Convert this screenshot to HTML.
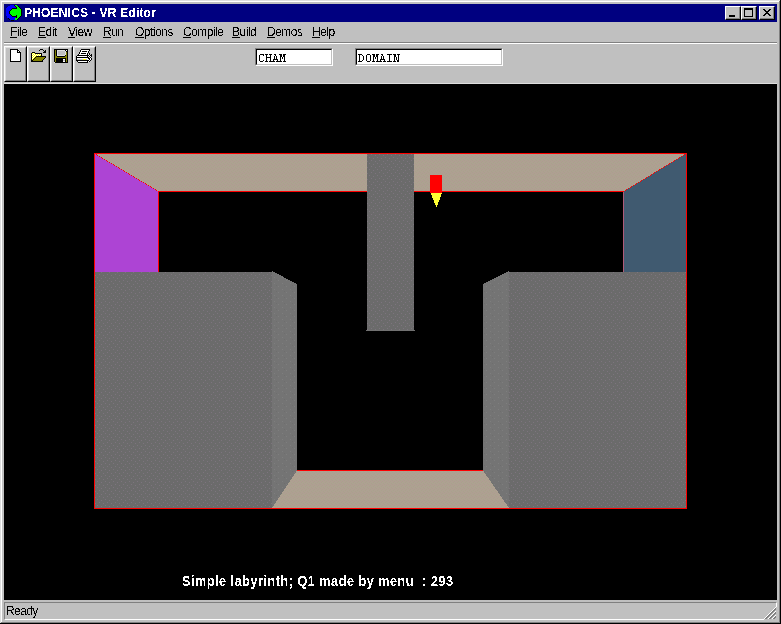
<!DOCTYPE html>
<html><head><meta charset="utf-8">
<style>
html,body{margin:0;padding:0;}
body{width:781px;height:624px;overflow:hidden;position:relative;background:#c0c0c0;font-family:"Liberation Sans",sans-serif;font-size:11px;color:#000;}
.a{position:absolute;}
.menu > span{position:absolute;top:0;white-space:nowrap;font-size:12px;letter-spacing:-0.5px;}
.crisp{filter:url(#th);}
.crisp3{filter:url(#th3);}
.u{text-decoration:underline;text-underline-offset:1px;}
</style></head><body>
<svg width="0" height="0" style="position:absolute"><filter id="th" x="0" y="0" width="100%" height="100%" color-interpolation-filters="sRGB"><feComponentTransfer><feFuncA type="discrete" tableValues="0 0 1 1"/></feComponentTransfer></filter><filter id="th3" x="0" y="0" width="100%" height="100%" color-interpolation-filters="sRGB"><feComponentTransfer><feFuncA type="discrete" tableValues="0 0 1 1 1"/></feComponentTransfer></filter></svg>
<!-- window frame -->
<div class="a" style="left:0;top:0;width:781px;height:1px;background:#dfdfdf"></div>
<div class="a" style="left:0;top:0;width:1px;height:624px;background:#dfdfdf"></div>
<div class="a" style="left:1px;top:1px;width:779px;height:1px;background:#fff"></div>
<div class="a" style="left:1px;top:1px;width:1px;height:622px;background:#fff"></div>
<div class="a" style="left:780px;top:0;width:1px;height:624px;background:#000"></div>
<div class="a" style="left:0;top:623px;width:781px;height:1px;background:#000"></div>
<div class="a" style="left:779px;top:1px;width:1px;height:622px;background:#808080"></div>
<div class="a" style="left:1px;top:622px;width:779px;height:1px;background:#808080"></div>

<!-- title bar -->
<div class="a" style="left:4px;top:4px;width:773px;height:18px;background:#000080"></div>
<svg class="a" style="left:4px;top:4px;" width="18" height="17" viewBox="0 0 18 17" shape-rendering="crispEdges"><rect x="6" y="1" width="4" height="1" fill="#0000ff"/><rect x="10" y="1" width="1" height="1" fill="#000000"/><rect x="11" y="1" width="2" height="1" fill="#00ff00"/><rect x="4" y="2" width="7" height="1" fill="#0000ff"/><rect x="11" y="2" width="1" height="1" fill="#000000"/><rect x="12" y="2" width="2" height="1" fill="#00ff00"/><rect x="14" y="2" width="1" height="1" fill="#000000"/><rect x="3" y="3" width="9" height="1" fill="#0000ff"/><rect x="12" y="3" width="1" height="1" fill="#000000"/><rect x="13" y="3" width="2" height="1" fill="#00ff00"/><rect x="15" y="3" width="1" height="1" fill="#000000"/><rect x="2" y="4" width="6" height="1" fill="#0000ff"/><rect x="8" y="4" width="5" height="1" fill="#000000"/><rect x="13" y="4" width="3" height="1" fill="#00ff00"/><rect x="16" y="4" width="1" height="1" fill="#000000"/><rect x="2" y="5" width="5" height="1" fill="#0000ff"/><rect x="7" y="5" width="1" height="1" fill="#000000"/><rect x="8" y="5" width="9" height="1" fill="#00ff00"/><rect x="17" y="5" width="1" height="1" fill="#000000"/><rect x="2" y="6" width="4" height="1" fill="#0000ff"/><rect x="6" y="6" width="1" height="1" fill="#000000"/><rect x="7" y="6" width="10" height="1" fill="#00ff00"/><rect x="17" y="6" width="1" height="1" fill="#000000"/><rect x="2" y="7" width="3" height="1" fill="#0000ff"/><rect x="5" y="7" width="1" height="1" fill="#000000"/><rect x="6" y="7" width="11" height="1" fill="#00ff00"/><rect x="17" y="7" width="1" height="1" fill="#000000"/><rect x="2" y="8" width="3" height="1" fill="#0000ff"/><rect x="5" y="8" width="1" height="1" fill="#000000"/><rect x="6" y="8" width="11" height="1" fill="#00ff00"/><rect x="17" y="8" width="1" height="1" fill="#000000"/><rect x="2" y="9" width="3" height="1" fill="#0000ff"/><rect x="5" y="9" width="1" height="1" fill="#000000"/><rect x="6" y="9" width="11" height="1" fill="#00ff00"/><rect x="17" y="9" width="1" height="1" fill="#000000"/><rect x="2" y="10" width="4" height="1" fill="#0000ff"/><rect x="6" y="10" width="1" height="1" fill="#000000"/><rect x="7" y="10" width="10" height="1" fill="#00ff00"/><rect x="17" y="10" width="1" height="1" fill="#000000"/><rect x="2" y="11" width="5" height="1" fill="#0000ff"/><rect x="7" y="11" width="1" height="1" fill="#000000"/><rect x="8" y="11" width="4" height="1" fill="#00ff00"/><rect x="12" y="11" width="1" height="1" fill="#000000"/><rect x="13" y="11" width="4" height="1" fill="#00ff00"/><rect x="17" y="11" width="1" height="1" fill="#000000"/><rect x="3" y="12" width="5" height="1" fill="#0000ff"/><rect x="8" y="12" width="5" height="1" fill="#000000"/><rect x="13" y="12" width="3" height="1" fill="#00ff00"/><rect x="16" y="12" width="1" height="1" fill="#000000"/><rect x="3" y="13" width="9" height="1" fill="#0000ff"/><rect x="12" y="13" width="1" height="1" fill="#000000"/><rect x="13" y="13" width="2" height="1" fill="#00ff00"/><rect x="15" y="13" width="1" height="1" fill="#000000"/><rect x="4" y="14" width="1" height="1" fill="#000000"/><rect x="5" y="14" width="6" height="1" fill="#0000ff"/><rect x="11" y="14" width="3" height="1" fill="#00ff00"/><rect x="14" y="14" width="1" height="1" fill="#000000"/><rect x="5" y="15" width="1" height="1" fill="#000000"/><rect x="6" y="15" width="5" height="1" fill="#0000ff"/><rect x="11" y="15" width="2" height="1" fill="#00ff00"/><rect x="13" y="15" width="1" height="1" fill="#000000"/><rect x="7" y="16" width="3" height="1" fill="#000000"/></svg>
<div class="a crisp" style="left:24px;top:6px;line-height:14px;color:#fff;font-weight:bold;font-size:12px;letter-spacing:0.2px;white-space:nowrap">PHOENICS - VR Editor</div>

<!-- caption buttons -->
<div class="a" style="left:725px;top:6px;width:16px;height:14px;box-sizing:border-box;background:#c0c0c0;border-top:1px solid #fff;border-left:1px solid #fff;border-right:1px solid #000;border-bottom:1px solid #000;">
  <div class="a" style="left:0;top:0;right:0;bottom:0;border-right:1px solid #808080;border-bottom:1px solid #808080;"></div>
  <div class="a" style="left:3px;top:8px;width:6px;height:2px;background:#000"></div>
</div>
<div class="a" style="left:741px;top:6px;width:16px;height:14px;box-sizing:border-box;background:#c0c0c0;border-top:1px solid #fff;border-left:1px solid #fff;border-right:1px solid #000;border-bottom:1px solid #000;">
  <div class="a" style="left:0;top:0;right:0;bottom:0;border-right:1px solid #808080;border-bottom:1px solid #808080;"></div>
  <div class="a" style="left:2px;top:1px;width:9px;height:9px;box-sizing:border-box;border:1px solid #000;border-top-width:2px"></div>
</div>
<div class="a" style="left:759px;top:6px;width:16px;height:14px;box-sizing:border-box;background:#c0c0c0;border-top:1px solid #fff;border-left:1px solid #fff;border-right:1px solid #000;border-bottom:1px solid #000;">
  <div class="a" style="left:0;top:0;right:0;bottom:0;border-right:1px solid #808080;border-bottom:1px solid #808080;"></div>
  <svg class="a" style="left:3px;top:2px" width="8" height="7" viewBox="0 0 8 7" shape-rendering="crispEdges">
    <path d="M0 0h2v1h1v1h2v-1h1v-1h2v1h-1v1h-1v1h-1v1h1v1h1v1h1v1h-2v-1h-1v-1h-2v1h-1v1h-2v-1h1v-1h1v-1h1v-1h-1v-1h-1v-1h-1z" fill="#000"/>
  </svg>
</div>

<!-- menu bar -->
<div class="a menu crisp" style="left:0;top:25px;width:781px;height:14px;">
  <span style="left:10px"><span class="u" style="position:static">F</span>ile</span>
  <span style="left:38px"><span class="u" style="position:static">E</span>dit</span>
  <span style="left:68px"><span class="u" style="position:static">V</span>iew</span>
  <span style="left:103px"><span class="u" style="position:static">R</span>un</span>
  <span style="left:135px"><span class="u" style="position:static">O</span>ptions</span>
  <span style="left:183px"><span class="u" style="position:static">C</span>ompile</span>
  <span style="left:232px"><span class="u" style="position:static">B</span>uild</span>
  <span style="left:267px"><span class="u" style="position:static">D</span>emos</span>
  <span style="left:312px"><span class="u" style="position:static">H</span>elp</span>
</div>
<div class="a" style="left:4px;top:42px;width:773px;height:1px;background:#808080"></div>
<div class="a" style="left:4px;top:43px;width:773px;height:1px;background:#fff"></div>

<!-- toolbar buttons -->
<div class="a" style="left:4px;top:46px;width:23px;height:36px;box-sizing:border-box;background:#c0c0c0;border-top:1px solid #fff;border-left:1px solid #fff;border-right:1px solid #000;border-bottom:1px solid #000;"><div class="a" style="left:0;top:0;right:0;bottom:0;border-top:1px solid #dfdfdf;border-left:1px solid #dfdfdf;border-right:1px solid #808080;border-bottom:1px solid #808080;"></div></div>
<div class="a" style="left:27px;top:46px;width:23px;height:36px;box-sizing:border-box;background:#c0c0c0;border-top:1px solid #fff;border-left:1px solid #fff;border-right:1px solid #000;border-bottom:1px solid #000;"><div class="a" style="left:0;top:0;right:0;bottom:0;border-top:1px solid #dfdfdf;border-left:1px solid #dfdfdf;border-right:1px solid #808080;border-bottom:1px solid #808080;"></div></div>
<div class="a" style="left:50px;top:46px;width:23px;height:36px;box-sizing:border-box;background:#c0c0c0;border-top:1px solid #fff;border-left:1px solid #fff;border-right:1px solid #000;border-bottom:1px solid #000;"><div class="a" style="left:0;top:0;right:0;bottom:0;border-top:1px solid #dfdfdf;border-left:1px solid #dfdfdf;border-right:1px solid #808080;border-bottom:1px solid #808080;"></div></div>
<div class="a" style="left:73px;top:46px;width:23px;height:36px;box-sizing:border-box;background:#c0c0c0;border-top:1px solid #fff;border-left:1px solid #fff;border-right:1px solid #000;border-bottom:1px solid #000;"><div class="a" style="left:0;top:0;right:0;bottom:0;border-top:1px solid #dfdfdf;border-left:1px solid #dfdfdf;border-right:1px solid #808080;border-bottom:1px solid #808080;"></div></div>
<svg class="a" style="left:10px;top:49px;" width="11" height="13" viewBox="0 0 11 13" shape-rendering="crispEdges"><rect x="0" y="0" width="8" height="1" fill="#000"/><rect x="8" y="0" width="1" height="1" fill="#dfdfdf"/><rect x="0" y="1" width="1" height="1" fill="#000"/><rect x="1" y="1" width="6" height="1" fill="#fff"/><rect x="7" y="1" width="2" height="1" fill="#000"/><rect x="9" y="1" width="1" height="1" fill="#dfdfdf"/><rect x="0" y="2" width="1" height="1" fill="#000"/><rect x="1" y="2" width="6" height="1" fill="#fff"/><rect x="7" y="2" width="1" height="1" fill="#000"/><rect x="8" y="2" width="1" height="1" fill="#fff"/><rect x="9" y="2" width="1" height="1" fill="#000"/><rect x="10" y="2" width="1" height="1" fill="#dfdfdf"/><rect x="0" y="3" width="1" height="1" fill="#000"/><rect x="1" y="3" width="6" height="1" fill="#fff"/><rect x="7" y="3" width="4" height="1" fill="#000"/><rect x="0" y="4" width="1" height="1" fill="#000"/><rect x="1" y="4" width="9" height="1" fill="#fff"/><rect x="10" y="4" width="1" height="1" fill="#000"/><rect x="0" y="5" width="1" height="1" fill="#000"/><rect x="1" y="5" width="9" height="1" fill="#fff"/><rect x="10" y="5" width="1" height="1" fill="#000"/><rect x="0" y="6" width="1" height="1" fill="#000"/><rect x="1" y="6" width="9" height="1" fill="#fff"/><rect x="10" y="6" width="1" height="1" fill="#000"/><rect x="0" y="7" width="1" height="1" fill="#000"/><rect x="1" y="7" width="9" height="1" fill="#fff"/><rect x="10" y="7" width="1" height="1" fill="#000"/><rect x="0" y="8" width="1" height="1" fill="#000"/><rect x="1" y="8" width="9" height="1" fill="#fff"/><rect x="10" y="8" width="1" height="1" fill="#000"/><rect x="0" y="9" width="1" height="1" fill="#000"/><rect x="1" y="9" width="9" height="1" fill="#fff"/><rect x="10" y="9" width="1" height="1" fill="#000"/><rect x="0" y="10" width="1" height="1" fill="#000"/><rect x="1" y="10" width="9" height="1" fill="#fff"/><rect x="10" y="10" width="1" height="1" fill="#000"/><rect x="0" y="11" width="1" height="1" fill="#000"/><rect x="1" y="11" width="9" height="1" fill="#fff"/><rect x="10" y="11" width="1" height="1" fill="#000"/><rect x="0" y="12" width="11" height="1" fill="#000"/></svg>
<svg class="a" style="left:30px;top:47px;" width="16" height="15" viewBox="0 0 16 15" shape-rendering="crispEdges"><rect x="10" y="2" width="3" height="1" fill="#000"/><rect x="9" y="3" width="1" height="1" fill="#000"/><rect x="13" y="3" width="1" height="1" fill="#000"/><rect x="15" y="3" width="1" height="1" fill="#000"/><rect x="14" y="4" width="2" height="1" fill="#000"/><rect x="2" y="5" width="3" height="1" fill="#000"/><rect x="13" y="5" width="3" height="1" fill="#000"/><rect x="1" y="6" width="1" height="1" fill="#000"/><rect x="2" y="6" width="1" height="1" fill="#ffff00"/><rect x="3" y="6" width="1" height="1" fill="#fff"/><rect x="4" y="6" width="1" height="1" fill="#ffff00"/><rect x="5" y="6" width="7" height="1" fill="#000"/><rect x="1" y="7" width="1" height="1" fill="#000"/><rect x="2" y="7" width="1" height="1" fill="#fff"/><rect x="3" y="7" width="1" height="1" fill="#ffff00"/><rect x="4" y="7" width="1" height="1" fill="#fff"/><rect x="5" y="7" width="1" height="1" fill="#ffff00"/><rect x="6" y="7" width="1" height="1" fill="#fff"/><rect x="7" y="7" width="1" height="1" fill="#ffff00"/><rect x="8" y="7" width="1" height="1" fill="#fff"/><rect x="9" y="7" width="1" height="1" fill="#ffff00"/><rect x="10" y="7" width="1" height="1" fill="#fff"/><rect x="11" y="7" width="1" height="1" fill="#000"/><rect x="1" y="8" width="1" height="1" fill="#000"/><rect x="2" y="8" width="1" height="1" fill="#ffff00"/><rect x="3" y="8" width="1" height="1" fill="#fff"/><rect x="4" y="8" width="1" height="1" fill="#ffff00"/><rect x="5" y="8" width="1" height="1" fill="#fff"/><rect x="6" y="8" width="1" height="1" fill="#ffff00"/><rect x="7" y="8" width="1" height="1" fill="#fff"/><rect x="8" y="8" width="1" height="1" fill="#ffff00"/><rect x="9" y="8" width="1" height="1" fill="#fff"/><rect x="10" y="8" width="1" height="1" fill="#ffff00"/><rect x="11" y="8" width="1" height="1" fill="#000"/><rect x="1" y="9" width="1" height="1" fill="#000"/><rect x="2" y="9" width="1" height="1" fill="#fff"/><rect x="3" y="9" width="1" height="1" fill="#ffff00"/><rect x="4" y="9" width="1" height="1" fill="#fff"/><rect x="5" y="9" width="1" height="1" fill="#ffff00"/><rect x="6" y="9" width="10" height="1" fill="#000"/><rect x="1" y="10" width="1" height="1" fill="#000"/><rect x="2" y="10" width="1" height="1" fill="#ffff00"/><rect x="3" y="10" width="1" height="1" fill="#fff"/><rect x="4" y="10" width="1" height="1" fill="#ffff00"/><rect x="5" y="10" width="1" height="1" fill="#000"/><rect x="6" y="10" width="9" height="1" fill="#808000"/><rect x="15" y="10" width="1" height="1" fill="#000"/><rect x="1" y="11" width="1" height="1" fill="#000"/><rect x="2" y="11" width="1" height="1" fill="#fff"/><rect x="3" y="11" width="1" height="1" fill="#ffff00"/><rect x="4" y="11" width="1" height="1" fill="#000"/><rect x="5" y="11" width="9" height="1" fill="#808000"/><rect x="14" y="11" width="1" height="1" fill="#000"/><rect x="1" y="12" width="1" height="1" fill="#000"/><rect x="2" y="12" width="1" height="1" fill="#ffff00"/><rect x="3" y="12" width="1" height="1" fill="#000"/><rect x="4" y="12" width="9" height="1" fill="#808000"/><rect x="13" y="12" width="1" height="1" fill="#000"/><rect x="1" y="13" width="2" height="1" fill="#000"/><rect x="3" y="13" width="9" height="1" fill="#808000"/><rect x="12" y="13" width="1" height="1" fill="#000"/><rect x="1" y="14" width="12" height="1" fill="#000"/></svg>
<svg class="a" style="left:54px;top:49px;" width="14" height="14" viewBox="0 0 14 14" shape-rendering="crispEdges"><rect x="0" y="0" width="14" height="1" fill="#000"/><rect x="0" y="1" width="1" height="1" fill="#000"/><rect x="1" y="1" width="1" height="1" fill="#808000"/><rect x="2" y="1" width="1" height="1" fill="#000"/><rect x="3" y="1" width="8" height="1" fill="#dfdfdf"/><rect x="11" y="1" width="1" height="1" fill="#000"/><rect x="12" y="1" width="1" height="1" fill="#fff"/><rect x="13" y="1" width="1" height="1" fill="#000"/><rect x="0" y="2" width="1" height="1" fill="#000"/><rect x="1" y="2" width="1" height="1" fill="#808000"/><rect x="2" y="2" width="1" height="1" fill="#000"/><rect x="3" y="2" width="1" height="1" fill="#dfdfdf"/><rect x="4" y="2" width="7" height="1" fill="#c0c0c0"/><rect x="11" y="2" width="1" height="1" fill="#dfdfdf"/><rect x="12" y="2" width="2" height="1" fill="#000"/><rect x="0" y="3" width="1" height="1" fill="#000"/><rect x="1" y="3" width="1" height="1" fill="#808000"/><rect x="2" y="3" width="1" height="1" fill="#000"/><rect x="3" y="3" width="1" height="1" fill="#dfdfdf"/><rect x="4" y="3" width="7" height="1" fill="#c0c0c0"/><rect x="11" y="3" width="1" height="1" fill="#dfdfdf"/><rect x="12" y="3" width="1" height="1" fill="#808000"/><rect x="13" y="3" width="1" height="1" fill="#000"/><rect x="0" y="4" width="1" height="1" fill="#000"/><rect x="1" y="4" width="1" height="1" fill="#808000"/><rect x="2" y="4" width="1" height="1" fill="#000"/><rect x="3" y="4" width="1" height="1" fill="#dfdfdf"/><rect x="4" y="4" width="7" height="1" fill="#c0c0c0"/><rect x="11" y="4" width="1" height="1" fill="#dfdfdf"/><rect x="12" y="4" width="1" height="1" fill="#808000"/><rect x="13" y="4" width="1" height="1" fill="#000"/><rect x="0" y="5" width="1" height="1" fill="#000"/><rect x="1" y="5" width="1" height="1" fill="#808000"/><rect x="2" y="5" width="1" height="1" fill="#000"/><rect x="3" y="5" width="1" height="1" fill="#dfdfdf"/><rect x="4" y="5" width="7" height="1" fill="#c0c0c0"/><rect x="11" y="5" width="1" height="1" fill="#dfdfdf"/><rect x="12" y="5" width="1" height="1" fill="#808000"/><rect x="13" y="5" width="1" height="1" fill="#000"/><rect x="0" y="6" width="1" height="1" fill="#000"/><rect x="1" y="6" width="1" height="1" fill="#808000"/><rect x="2" y="6" width="1" height="1" fill="#000"/><rect x="3" y="6" width="8" height="1" fill="#dfdfdf"/><rect x="11" y="6" width="1" height="1" fill="#000"/><rect x="12" y="6" width="1" height="1" fill="#808000"/><rect x="13" y="6" width="1" height="1" fill="#000"/><rect x="0" y="7" width="1" height="1" fill="#000"/><rect x="1" y="7" width="2" height="1" fill="#808000"/><rect x="3" y="7" width="8" height="1" fill="#000"/><rect x="11" y="7" width="2" height="1" fill="#808000"/><rect x="13" y="7" width="1" height="1" fill="#000"/><rect x="0" y="8" width="1" height="1" fill="#000"/><rect x="1" y="8" width="12" height="1" fill="#808000"/><rect x="13" y="8" width="1" height="1" fill="#000"/><rect x="0" y="9" width="1" height="1" fill="#000"/><rect x="1" y="9" width="1" height="1" fill="#808000"/><rect x="2" y="9" width="10" height="1" fill="#000"/><rect x="12" y="9" width="1" height="1" fill="#808000"/><rect x="13" y="9" width="1" height="1" fill="#000"/><rect x="0" y="10" width="1" height="1" fill="#000"/><rect x="1" y="10" width="1" height="1" fill="#808000"/><rect x="2" y="10" width="7" height="1" fill="#000"/><rect x="9" y="10" width="2" height="1" fill="#fff"/><rect x="11" y="10" width="1" height="1" fill="#000"/><rect x="12" y="10" width="1" height="1" fill="#808000"/><rect x="13" y="10" width="1" height="1" fill="#000"/><rect x="0" y="11" width="1" height="1" fill="#000"/><rect x="1" y="11" width="1" height="1" fill="#808000"/><rect x="2" y="11" width="7" height="1" fill="#000"/><rect x="9" y="11" width="2" height="1" fill="#c0c0c0"/><rect x="11" y="11" width="1" height="1" fill="#000"/><rect x="12" y="11" width="1" height="1" fill="#808000"/><rect x="13" y="11" width="1" height="1" fill="#000"/><rect x="0" y="12" width="1" height="1" fill="#000"/><rect x="1" y="12" width="1" height="1" fill="#808000"/><rect x="2" y="12" width="7" height="1" fill="#000"/><rect x="9" y="12" width="2" height="1" fill="#fff"/><rect x="11" y="12" width="1" height="1" fill="#000"/><rect x="12" y="12" width="1" height="1" fill="#808000"/><rect x="13" y="12" width="1" height="1" fill="#000"/><rect x="0" y="13" width="1" height="1" fill="#dfdfdf"/><rect x="1" y="13" width="13" height="1" fill="#000"/></svg>
<svg class="a" style="left:75px;top:48px;" width="18" height="15" viewBox="0 0 18 15" shape-rendering="crispEdges"><rect x="6" y="1" width="9" height="1" fill="#000"/><rect x="5" y="2" width="1" height="1" fill="#000"/><rect x="6" y="2" width="8" height="1" fill="#fff"/><rect x="14" y="2" width="1" height="1" fill="#000"/><rect x="5" y="3" width="1" height="1" fill="#000"/><rect x="6" y="3" width="1" height="1" fill="#fff"/><rect x="7" y="3" width="5" height="1" fill="#000"/><rect x="12" y="3" width="1" height="1" fill="#fff"/><rect x="13" y="3" width="1" height="1" fill="#000"/><rect x="4" y="4" width="1" height="1" fill="#000"/><rect x="5" y="4" width="8" height="1" fill="#fff"/><rect x="13" y="4" width="1" height="1" fill="#000"/><rect x="4" y="5" width="1" height="1" fill="#000"/><rect x="5" y="5" width="1" height="1" fill="#fff"/><rect x="6" y="5" width="5" height="1" fill="#000"/><rect x="11" y="5" width="1" height="1" fill="#fff"/><rect x="12" y="5" width="1" height="1" fill="#000"/><rect x="14" y="5" width="1" height="1" fill="#000"/><rect x="3" y="6" width="1" height="1" fill="#000"/><rect x="4" y="6" width="8" height="1" fill="#fff"/><rect x="12" y="6" width="1" height="1" fill="#000"/><rect x="13" y="6" width="1" height="1" fill="#fff"/><rect x="14" y="6" width="1" height="1" fill="#000"/><rect x="16" y="6" width="1" height="1" fill="#000"/><rect x="2" y="7" width="12" height="1" fill="#000"/><rect x="14" y="7" width="1" height="1" fill="#fff"/><rect x="15" y="7" width="2" height="1" fill="#000"/><rect x="1" y="8" width="1" height="1" fill="#000"/><rect x="2" y="8" width="10" height="1" fill="#fff"/><rect x="12" y="8" width="1" height="1" fill="#000"/><rect x="13" y="8" width="1" height="1" fill="#fff"/><rect x="14" y="8" width="1" height="1" fill="#000"/><rect x="15" y="8" width="1" height="1" fill="#fff"/><rect x="16" y="8" width="1" height="1" fill="#000"/><rect x="1" y="9" width="13" height="1" fill="#000"/><rect x="14" y="9" width="1" height="1" fill="#fff"/><rect x="15" y="9" width="1" height="1" fill="#000"/><rect x="1" y="10" width="1" height="1" fill="#000"/><rect x="2" y="10" width="11" height="1" fill="#fff"/><rect x="13" y="10" width="2" height="1" fill="#000"/><rect x="15" y="10" width="1" height="1" fill="#fff"/><rect x="16" y="10" width="1" height="1" fill="#000"/><rect x="1" y="11" width="1" height="1" fill="#000"/><rect x="2" y="11" width="6" height="1" fill="#c0c0c0"/><rect x="8" y="11" width="3" height="1" fill="#ffff00"/><rect x="11" y="11" width="1" height="1" fill="#c0c0c0"/><rect x="12" y="11" width="2" height="1" fill="#fff"/><rect x="14" y="11" width="1" height="1" fill="#000"/><rect x="15" y="11" width="1" height="1" fill="#fff"/><rect x="16" y="11" width="1" height="1" fill="#000"/><rect x="1" y="12" width="13" height="1" fill="#000"/><rect x="14" y="12" width="1" height="1" fill="#fff"/><rect x="15" y="12" width="1" height="1" fill="#000"/><rect x="2" y="13" width="1" height="1" fill="#000"/><rect x="3" y="13" width="9" height="1" fill="#fff"/><rect x="12" y="13" width="1" height="1" fill="#000"/><rect x="13" y="13" width="1" height="1" fill="#fff"/><rect x="14" y="13" width="1" height="1" fill="#000"/><rect x="3" y="14" width="10" height="1" fill="#000"/></svg>

<!-- edit fields -->
<div class="a" style="left:255px;top:48px;width:78px;height:18px;box-sizing:border-box;background:#fff;border-top:1px solid #808080;border-left:1px solid #808080;border-right:1px solid #fff;border-bottom:1px solid #fff;">
  <div class="a" style="left:0;top:0;right:0;bottom:0;border-top:1px solid #000;border-left:1px solid #000;border-right:1px solid #c0c0c0;border-bottom:1px solid #c0c0c0;"></div>
  
</div>
<div class="a" style="left:355px;top:48px;width:148px;height:18px;box-sizing:border-box;background:#fff;border-top:1px solid #808080;border-left:1px solid #808080;border-right:1px solid #fff;border-bottom:1px solid #fff;">
  <div class="a" style="left:0;top:0;right:0;bottom:0;border-top:1px solid #000;border-left:1px solid #000;border-right:1px solid #c0c0c0;border-bottom:1px solid #c0c0c0;"></div>
  
</div>

<svg class="a" style="left:258px;top:54px;" width="28" height="8" viewBox="0 0 28 8" shape-rendering="crispEdges"><rect x="2" y="0" width="4" height="1" fill="#000"/><rect x="7" y="0" width="3" height="1" fill="#000"/><rect x="11" y="0" width="3" height="1" fill="#000"/><rect x="16" y="0" width="2" height="1" fill="#000"/><rect x="21" y="0" width="3" height="1" fill="#000"/><rect x="25" y="0" width="3" height="1" fill="#000"/><rect x="1" y="1" width="1" height="1" fill="#000"/><rect x="5" y="1" width="1" height="1" fill="#000"/><rect x="8" y="1" width="1" height="1" fill="#000"/><rect x="12" y="1" width="1" height="1" fill="#000"/><rect x="17" y="1" width="1" height="1" fill="#000"/><rect x="22" y="1" width="2" height="1" fill="#000"/><rect x="25" y="1" width="2" height="1" fill="#000"/><rect x="1" y="2" width="1" height="1" fill="#000"/><rect x="8" y="2" width="1" height="1" fill="#000"/><rect x="12" y="2" width="1" height="1" fill="#000"/><rect x="16" y="2" width="1" height="1" fill="#000"/><rect x="18" y="2" width="1" height="1" fill="#000"/><rect x="22" y="2" width="2" height="1" fill="#000"/><rect x="25" y="2" width="2" height="1" fill="#000"/><rect x="1" y="3" width="1" height="1" fill="#000"/><rect x="8" y="3" width="5" height="1" fill="#000"/><rect x="16" y="3" width="1" height="1" fill="#000"/><rect x="18" y="3" width="1" height="1" fill="#000"/><rect x="22" y="3" width="1" height="1" fill="#000"/><rect x="24" y="3" width="1" height="1" fill="#000"/><rect x="26" y="3" width="1" height="1" fill="#000"/><rect x="1" y="4" width="1" height="1" fill="#000"/><rect x="8" y="4" width="1" height="1" fill="#000"/><rect x="12" y="4" width="1" height="1" fill="#000"/><rect x="16" y="4" width="1" height="1" fill="#000"/><rect x="18" y="4" width="1" height="1" fill="#000"/><rect x="22" y="4" width="1" height="1" fill="#000"/><rect x="24" y="4" width="1" height="1" fill="#000"/><rect x="26" y="4" width="1" height="1" fill="#000"/><rect x="1" y="5" width="1" height="1" fill="#000"/><rect x="8" y="5" width="1" height="1" fill="#000"/><rect x="12" y="5" width="1" height="1" fill="#000"/><rect x="15" y="5" width="5" height="1" fill="#000"/><rect x="22" y="5" width="1" height="1" fill="#000"/><rect x="26" y="5" width="1" height="1" fill="#000"/><rect x="1" y="6" width="1" height="1" fill="#000"/><rect x="5" y="6" width="1" height="1" fill="#000"/><rect x="8" y="6" width="1" height="1" fill="#000"/><rect x="12" y="6" width="1" height="1" fill="#000"/><rect x="15" y="6" width="1" height="1" fill="#000"/><rect x="19" y="6" width="1" height="1" fill="#000"/><rect x="22" y="6" width="1" height="1" fill="#000"/><rect x="26" y="6" width="1" height="1" fill="#000"/><rect x="2" y="7" width="3" height="1" fill="#000"/><rect x="7" y="7" width="3" height="1" fill="#000"/><rect x="11" y="7" width="6" height="1" fill="#000"/><rect x="18" y="7" width="6" height="1" fill="#000"/><rect x="25" y="7" width="3" height="1" fill="#000"/></svg><svg class="a" style="left:358px;top:54px;" width="42" height="8" viewBox="0 0 42 8" shape-rendering="crispEdges"><rect x="0" y="0" width="4" height="1" fill="#000"/><rect x="9" y="0" width="3" height="1" fill="#000"/><rect x="14" y="0" width="3" height="1" fill="#000"/><rect x="18" y="0" width="3" height="1" fill="#000"/><rect x="23" y="0" width="2" height="1" fill="#000"/><rect x="29" y="0" width="5" height="1" fill="#000"/><rect x="35" y="0" width="3" height="1" fill="#000"/><rect x="39" y="0" width="3" height="1" fill="#000"/><rect x="1" y="1" width="1" height="1" fill="#000"/><rect x="4" y="1" width="1" height="1" fill="#000"/><rect x="8" y="1" width="1" height="1" fill="#000"/><rect x="12" y="1" width="1" height="1" fill="#000"/><rect x="15" y="1" width="2" height="1" fill="#000"/><rect x="18" y="1" width="2" height="1" fill="#000"/><rect x="24" y="1" width="1" height="1" fill="#000"/><rect x="31" y="1" width="1" height="1" fill="#000"/><rect x="36" y="1" width="2" height="1" fill="#000"/><rect x="40" y="1" width="1" height="1" fill="#000"/><rect x="1" y="2" width="1" height="1" fill="#000"/><rect x="5" y="2" width="1" height="1" fill="#000"/><rect x="8" y="2" width="1" height="1" fill="#000"/><rect x="12" y="2" width="1" height="1" fill="#000"/><rect x="15" y="2" width="2" height="1" fill="#000"/><rect x="18" y="2" width="2" height="1" fill="#000"/><rect x="23" y="2" width="1" height="1" fill="#000"/><rect x="25" y="2" width="1" height="1" fill="#000"/><rect x="31" y="2" width="1" height="1" fill="#000"/><rect x="36" y="2" width="2" height="1" fill="#000"/><rect x="40" y="2" width="1" height="1" fill="#000"/><rect x="1" y="3" width="1" height="1" fill="#000"/><rect x="5" y="3" width="1" height="1" fill="#000"/><rect x="8" y="3" width="1" height="1" fill="#000"/><rect x="12" y="3" width="1" height="1" fill="#000"/><rect x="15" y="3" width="1" height="1" fill="#000"/><rect x="17" y="3" width="1" height="1" fill="#000"/><rect x="19" y="3" width="1" height="1" fill="#000"/><rect x="23" y="3" width="1" height="1" fill="#000"/><rect x="25" y="3" width="1" height="1" fill="#000"/><rect x="31" y="3" width="1" height="1" fill="#000"/><rect x="36" y="3" width="1" height="1" fill="#000"/><rect x="38" y="3" width="1" height="1" fill="#000"/><rect x="40" y="3" width="1" height="1" fill="#000"/><rect x="1" y="4" width="1" height="1" fill="#000"/><rect x="5" y="4" width="1" height="1" fill="#000"/><rect x="8" y="4" width="1" height="1" fill="#000"/><rect x="12" y="4" width="1" height="1" fill="#000"/><rect x="15" y="4" width="1" height="1" fill="#000"/><rect x="17" y="4" width="1" height="1" fill="#000"/><rect x="19" y="4" width="1" height="1" fill="#000"/><rect x="23" y="4" width="1" height="1" fill="#000"/><rect x="25" y="4" width="1" height="1" fill="#000"/><rect x="31" y="4" width="1" height="1" fill="#000"/><rect x="36" y="4" width="1" height="1" fill="#000"/><rect x="38" y="4" width="1" height="1" fill="#000"/><rect x="40" y="4" width="1" height="1" fill="#000"/><rect x="1" y="5" width="1" height="1" fill="#000"/><rect x="5" y="5" width="1" height="1" fill="#000"/><rect x="8" y="5" width="1" height="1" fill="#000"/><rect x="12" y="5" width="1" height="1" fill="#000"/><rect x="15" y="5" width="1" height="1" fill="#000"/><rect x="19" y="5" width="1" height="1" fill="#000"/><rect x="22" y="5" width="5" height="1" fill="#000"/><rect x="31" y="5" width="1" height="1" fill="#000"/><rect x="36" y="5" width="1" height="1" fill="#000"/><rect x="38" y="5" width="1" height="1" fill="#000"/><rect x="40" y="5" width="1" height="1" fill="#000"/><rect x="1" y="6" width="1" height="1" fill="#000"/><rect x="4" y="6" width="1" height="1" fill="#000"/><rect x="8" y="6" width="1" height="1" fill="#000"/><rect x="12" y="6" width="1" height="1" fill="#000"/><rect x="15" y="6" width="1" height="1" fill="#000"/><rect x="19" y="6" width="1" height="1" fill="#000"/><rect x="22" y="6" width="1" height="1" fill="#000"/><rect x="26" y="6" width="1" height="1" fill="#000"/><rect x="31" y="6" width="1" height="1" fill="#000"/><rect x="36" y="6" width="1" height="1" fill="#000"/><rect x="39" y="6" width="2" height="1" fill="#000"/><rect x="0" y="7" width="4" height="1" fill="#000"/><rect x="9" y="7" width="3" height="1" fill="#000"/><rect x="14" y="7" width="3" height="1" fill="#000"/><rect x="18" y="7" width="6" height="1" fill="#000"/><rect x="25" y="7" width="3" height="1" fill="#000"/><rect x="29" y="7" width="5" height="1" fill="#000"/><rect x="35" y="7" width="3" height="1" fill="#000"/><rect x="39" y="7" width="2" height="1" fill="#000"/></svg>
<div class="a" style="left:4px;top:83px;width:773px;height:1px;background:#dfdfdf"></div>

<!-- view area -->
<div class="a" style="left:4px;top:84px;width:773px;height:516px;background:#000"></div>
<svg class="a" style="left:0;top:0" width="781" height="624" viewBox="0 0 781 624" shape-rendering="crispEdges">
  <defs>
    <pattern id="pg" x="0" y="0" width="8" height="6" patternUnits="userSpaceOnUse">
      <rect width="8" height="6" fill="#6b6b6b"/>
      <rect x="1" y="1" width="1" height="1" fill="#7d747e"/>
      <rect x="5" y="2" width="1" height="1" fill="#7d747e"/>
      <rect x="3" y="4" width="1" height="1" fill="#7d747e"/>
      <rect x="7" y="5" width="1" height="1" fill="#7d747e"/>
    </pattern>
    <pattern id="ps" x="0" y="0" width="8" height="6" patternUnits="userSpaceOnUse">
      <rect width="8" height="6" fill="#747474"/>
      <rect x="2" y="1" width="1" height="1" fill="#7e7e7e"/>
      <rect x="6" y="4" width="1" height="1" fill="#7e7e7e"/>
      <rect x="4" y="3" width="1" height="1" fill="#6e6e6e"/>
    </pattern>
    <pattern id="pb" x="0" y="0" width="4" height="4" patternUnits="userSpaceOnUse">
      <rect width="4" height="4" fill="#aea092"/>
      <rect x="0" y="0" width="1" height="1" fill="#a8a48b"/>
      <rect x="2" y="1" width="1" height="1" fill="#a8a48b"/>
      <rect x="1" y="2" width="1" height="1" fill="#a8a48b"/>
      <rect x="3" y="3" width="1" height="1" fill="#a8a48b"/>
      <rect x="3" y="0" width="1" height="1" fill="#b29a94"/>
      <rect x="1" y="1" width="1" height="1" fill="#b29a94"/>
    </pattern>
  </defs>
  <!-- ceiling -->
  <polygon points="94,153 687,153 623.5,191.5 158.5,191.5" fill="url(#pb)"/>
  <!-- left wall -->
  <polygon points="94,153 158.5,191.5 158.5,470.5 94,509" fill="#ad44d4"/>
  <!-- right wall -->
  <polygon points="687,153 623.5,191.5 623.5,470.5 687,509" fill="#405a70"/>
  <!-- floor -->
  <polygon points="94,509 687,509 623.5,470.5 158.5,470.5" fill="url(#pb)"/>
  <!-- red lines -->
  <g stroke="#ff0000" stroke-width="1" fill="none">
    <line x1="94" y1="153.5" x2="687" y2="153.5"/>
    <line x1="94.5" y1="153" x2="94.5" y2="509"/>
    <line x1="686.5" y1="153" x2="686.5" y2="509"/>
    <line x1="94" y1="508.5" x2="687" y2="508.5"/>
    <line x1="158" y1="191.5" x2="624" y2="191.5"/>
    <line x1="158.5" y1="191" x2="158.5" y2="272"/>
    <line x1="297" y1="470.5" x2="484" y2="470.5"/>
  </g>
  <line x1="623.5" y1="191" x2="623.5" y2="272" stroke="#b05a78" stroke-width="1"/>
  <rect x="94" y="153" width="1" height="1" fill="#f00"/><rect x="686" y="153" width="1" height="1" fill="#f00"/><rect x="96" y="154" width="1" height="1" fill="#f00"/><rect x="684" y="154" width="1" height="1" fill="#f00"/><rect x="97" y="155" width="1" height="1" fill="#f00"/><rect x="683" y="155" width="1" height="1" fill="#f00"/><rect x="99" y="156" width="1" height="1" fill="#f00"/><rect x="681" y="156" width="1" height="1" fill="#f00"/><rect x="101" y="157" width="1" height="1" fill="#f00"/><rect x="679" y="157" width="1" height="1" fill="#f00"/><rect x="102" y="158" width="1" height="1" fill="#f00"/><rect x="678" y="158" width="1" height="1" fill="#f00"/><rect x="104" y="159" width="1" height="1" fill="#f00"/><rect x="676" y="159" width="1" height="1" fill="#f00"/><rect x="106" y="160" width="1" height="1" fill="#f00"/><rect x="674" y="160" width="1" height="1" fill="#f00"/><rect x="107" y="161" width="1" height="1" fill="#f00"/><rect x="673" y="161" width="1" height="1" fill="#f00"/><rect x="109" y="162" width="1" height="1" fill="#f00"/><rect x="671" y="162" width="1" height="1" fill="#f00"/><rect x="111" y="163" width="1" height="1" fill="#f00"/><rect x="669" y="163" width="1" height="1" fill="#f00"/><rect x="113" y="164" width="1" height="1" fill="#f00"/><rect x="668" y="164" width="1" height="1" fill="#f00"/><rect x="114" y="165" width="1" height="1" fill="#f00"/><rect x="666" y="165" width="1" height="1" fill="#f00"/><rect x="116" y="166" width="1" height="1" fill="#f00"/><rect x="664" y="166" width="1" height="1" fill="#f00"/><rect x="118" y="167" width="1" height="1" fill="#f00"/><rect x="663" y="167" width="1" height="1" fill="#f00"/><rect x="119" y="168" width="1" height="1" fill="#f00"/><rect x="661" y="168" width="1" height="1" fill="#f00"/><rect x="121" y="169" width="1" height="1" fill="#f00"/><rect x="659" y="169" width="1" height="1" fill="#f00"/><rect x="123" y="170" width="1" height="1" fill="#f00"/><rect x="658" y="170" width="1" height="1" fill="#f00"/><rect x="124" y="171" width="1" height="1" fill="#f00"/><rect x="656" y="171" width="1" height="1" fill="#f00"/><rect x="126" y="172" width="1" height="1" fill="#f00"/><rect x="654" y="172" width="1" height="1" fill="#f00"/><rect x="128" y="173" width="1" height="1" fill="#f00"/><rect x="653" y="173" width="1" height="1" fill="#f00"/><rect x="129" y="174" width="1" height="1" fill="#f00"/><rect x="651" y="174" width="1" height="1" fill="#f00"/><rect x="131" y="175" width="1" height="1" fill="#f00"/><rect x="650" y="175" width="1" height="1" fill="#f00"/><rect x="133" y="176" width="1" height="1" fill="#f00"/><rect x="648" y="176" width="1" height="1" fill="#f00"/><rect x="134" y="177" width="1" height="1" fill="#f00"/><rect x="646" y="177" width="1" height="1" fill="#f00"/><rect x="136" y="178" width="1" height="1" fill="#f00"/><rect x="645" y="178" width="1" height="1" fill="#f00"/><rect x="138" y="179" width="1" height="1" fill="#f00"/><rect x="643" y="179" width="1" height="1" fill="#f00"/><rect x="139" y="180" width="1" height="1" fill="#f00"/><rect x="641" y="180" width="1" height="1" fill="#f00"/><rect x="141" y="181" width="1" height="1" fill="#f00"/><rect x="640" y="181" width="1" height="1" fill="#f00"/><rect x="143" y="182" width="1" height="1" fill="#f00"/><rect x="638" y="182" width="1" height="1" fill="#f00"/><rect x="145" y="183" width="1" height="1" fill="#f00"/><rect x="636" y="183" width="1" height="1" fill="#f00"/><rect x="146" y="184" width="1" height="1" fill="#f00"/><rect x="635" y="184" width="1" height="1" fill="#f00"/><rect x="148" y="185" width="1" height="1" fill="#f00"/><rect x="633" y="185" width="1" height="1" fill="#f00"/><rect x="150" y="186" width="1" height="1" fill="#f00"/><rect x="631" y="186" width="1" height="1" fill="#f00"/><rect x="151" y="187" width="1" height="1" fill="#f00"/><rect x="630" y="187" width="1" height="1" fill="#f00"/><rect x="153" y="188" width="1" height="1" fill="#f00"/><rect x="628" y="188" width="1" height="1" fill="#f00"/><rect x="155" y="189" width="1" height="1" fill="#f00"/><rect x="626" y="189" width="1" height="1" fill="#f00"/><rect x="156" y="190" width="1" height="1" fill="#f00"/><rect x="625" y="190" width="1" height="1" fill="#f00"/><rect x="158" y="191" width="1" height="1" fill="#f00"/><rect x="623" y="191" width="1" height="1" fill="#f00"/>
  <!-- center column -->
  <rect x="367" y="154" width="47" height="177" fill="url(#pg)"/>
  <rect x="366" y="330" width="49" height="1" fill="#717171"/>
  <!-- left block -->
  <rect x="95" y="272" width="177" height="236" fill="url(#pg)"/>
  <polygon points="272,271 297,284 297,470.5 272,508" fill="url(#ps)"/>
  <!-- right block -->
  <rect x="509" y="272" width="177" height="236" fill="url(#pg)"/>
  <polygon points="509,271 483,284 483,470.5 509,508" fill="url(#ps)"/>
  <!-- marker -->
  <rect x="430" y="175" width="12" height="18" fill="#ff0000"/>
  <polygon points="430.5,193 442,193 436.5,207.5" fill="#ffff33"/>
</svg>
<div class="a crisp" style="left:182px;top:573px;color:#fff;font-weight:bold;font-size:14px;letter-spacing:0.6px;transform:scaleX(0.9);transform-origin:0 0;white-space:nowrap">Simple labyrinth; Q1 made by menu&nbsp; : 293</div>

<!-- status bar -->
<div class="a" style="left:4px;top:602px;width:773px;height:18px;box-sizing:border-box;border-top:1px solid #808080;border-left:1px solid #808080;border-right:1px solid #fff;border-bottom:1px solid #fff;"></div>
<div class="a crisp" style="left:6px;top:604px;white-space:nowrap;font-size:12px;letter-spacing:-0.6px">Ready</div>
<svg class="a" style="left:761px;top:603px;" width="16" height="17" viewBox="0 0 16 17" shape-rendering="crispEdges"><rect x="15" y="0" width="1" height="1" fill="#fff"/><rect x="15" y="1" width="1" height="1" fill="#fff"/><rect x="15" y="2" width="1" height="1" fill="#fff"/><rect x="15" y="3" width="1" height="1" fill="#fff"/><rect x="14" y="4" width="1" height="1" fill="#fff"/><rect x="15" y="4" width="1" height="1" fill="#c0c0c0"/><rect x="13" y="5" width="1" height="1" fill="#fff"/><rect x="14" y="5" width="1" height="1" fill="#808080"/><rect x="15" y="5" width="1" height="1" fill="#c0c0c0"/><rect x="12" y="6" width="1" height="1" fill="#fff"/><rect x="13" y="6" width="2" height="1" fill="#808080"/><rect x="15" y="6" width="1" height="1" fill="#c0c0c0"/><rect x="11" y="7" width="1" height="1" fill="#fff"/><rect x="12" y="7" width="2" height="1" fill="#808080"/><rect x="15" y="7" width="1" height="1" fill="#c0c0c0"/><rect x="10" y="8" width="1" height="1" fill="#fff"/><rect x="11" y="8" width="2" height="1" fill="#808080"/><rect x="14" y="8" width="1" height="1" fill="#fff"/><rect x="15" y="8" width="1" height="1" fill="#c0c0c0"/><rect x="9" y="9" width="1" height="1" fill="#fff"/><rect x="10" y="9" width="2" height="1" fill="#808080"/><rect x="13" y="9" width="1" height="1" fill="#fff"/><rect x="14" y="9" width="1" height="1" fill="#808080"/><rect x="15" y="9" width="1" height="1" fill="#c0c0c0"/><rect x="8" y="10" width="1" height="1" fill="#fff"/><rect x="9" y="10" width="2" height="1" fill="#808080"/><rect x="12" y="10" width="1" height="1" fill="#fff"/><rect x="13" y="10" width="2" height="1" fill="#808080"/><rect x="15" y="10" width="1" height="1" fill="#c0c0c0"/><rect x="7" y="11" width="1" height="1" fill="#fff"/><rect x="8" y="11" width="2" height="1" fill="#808080"/><rect x="11" y="11" width="1" height="1" fill="#fff"/><rect x="12" y="11" width="2" height="1" fill="#808080"/><rect x="15" y="11" width="1" height="1" fill="#c0c0c0"/><rect x="6" y="12" width="1" height="1" fill="#fff"/><rect x="7" y="12" width="2" height="1" fill="#808080"/><rect x="10" y="12" width="1" height="1" fill="#fff"/><rect x="11" y="12" width="2" height="1" fill="#808080"/><rect x="14" y="12" width="1" height="1" fill="#fff"/><rect x="15" y="12" width="1" height="1" fill="#c0c0c0"/><rect x="5" y="13" width="1" height="1" fill="#fff"/><rect x="6" y="13" width="2" height="1" fill="#808080"/><rect x="9" y="13" width="1" height="1" fill="#fff"/><rect x="10" y="13" width="2" height="1" fill="#808080"/><rect x="13" y="13" width="1" height="1" fill="#fff"/><rect x="14" y="13" width="1" height="1" fill="#808080"/><rect x="15" y="13" width="1" height="1" fill="#c0c0c0"/><rect x="4" y="14" width="1" height="1" fill="#fff"/><rect x="5" y="14" width="2" height="1" fill="#808080"/><rect x="8" y="14" width="1" height="1" fill="#fff"/><rect x="9" y="14" width="2" height="1" fill="#808080"/><rect x="12" y="14" width="1" height="1" fill="#fff"/><rect x="13" y="14" width="2" height="1" fill="#808080"/><rect x="15" y="14" width="1" height="1" fill="#c0c0c0"/><rect x="3" y="15" width="1" height="1" fill="#fff"/><rect x="4" y="15" width="2" height="1" fill="#808080"/><rect x="7" y="15" width="1" height="1" fill="#fff"/><rect x="8" y="15" width="2" height="1" fill="#808080"/><rect x="11" y="15" width="1" height="1" fill="#fff"/><rect x="12" y="15" width="2" height="1" fill="#808080"/><rect x="15" y="15" width="1" height="1" fill="#c0c0c0"/><rect x="0" y="16" width="3" height="1" fill="#fff"/><rect x="3" y="16" width="13" height="1" fill="#c0c0c0"/></svg>
</body></html>
